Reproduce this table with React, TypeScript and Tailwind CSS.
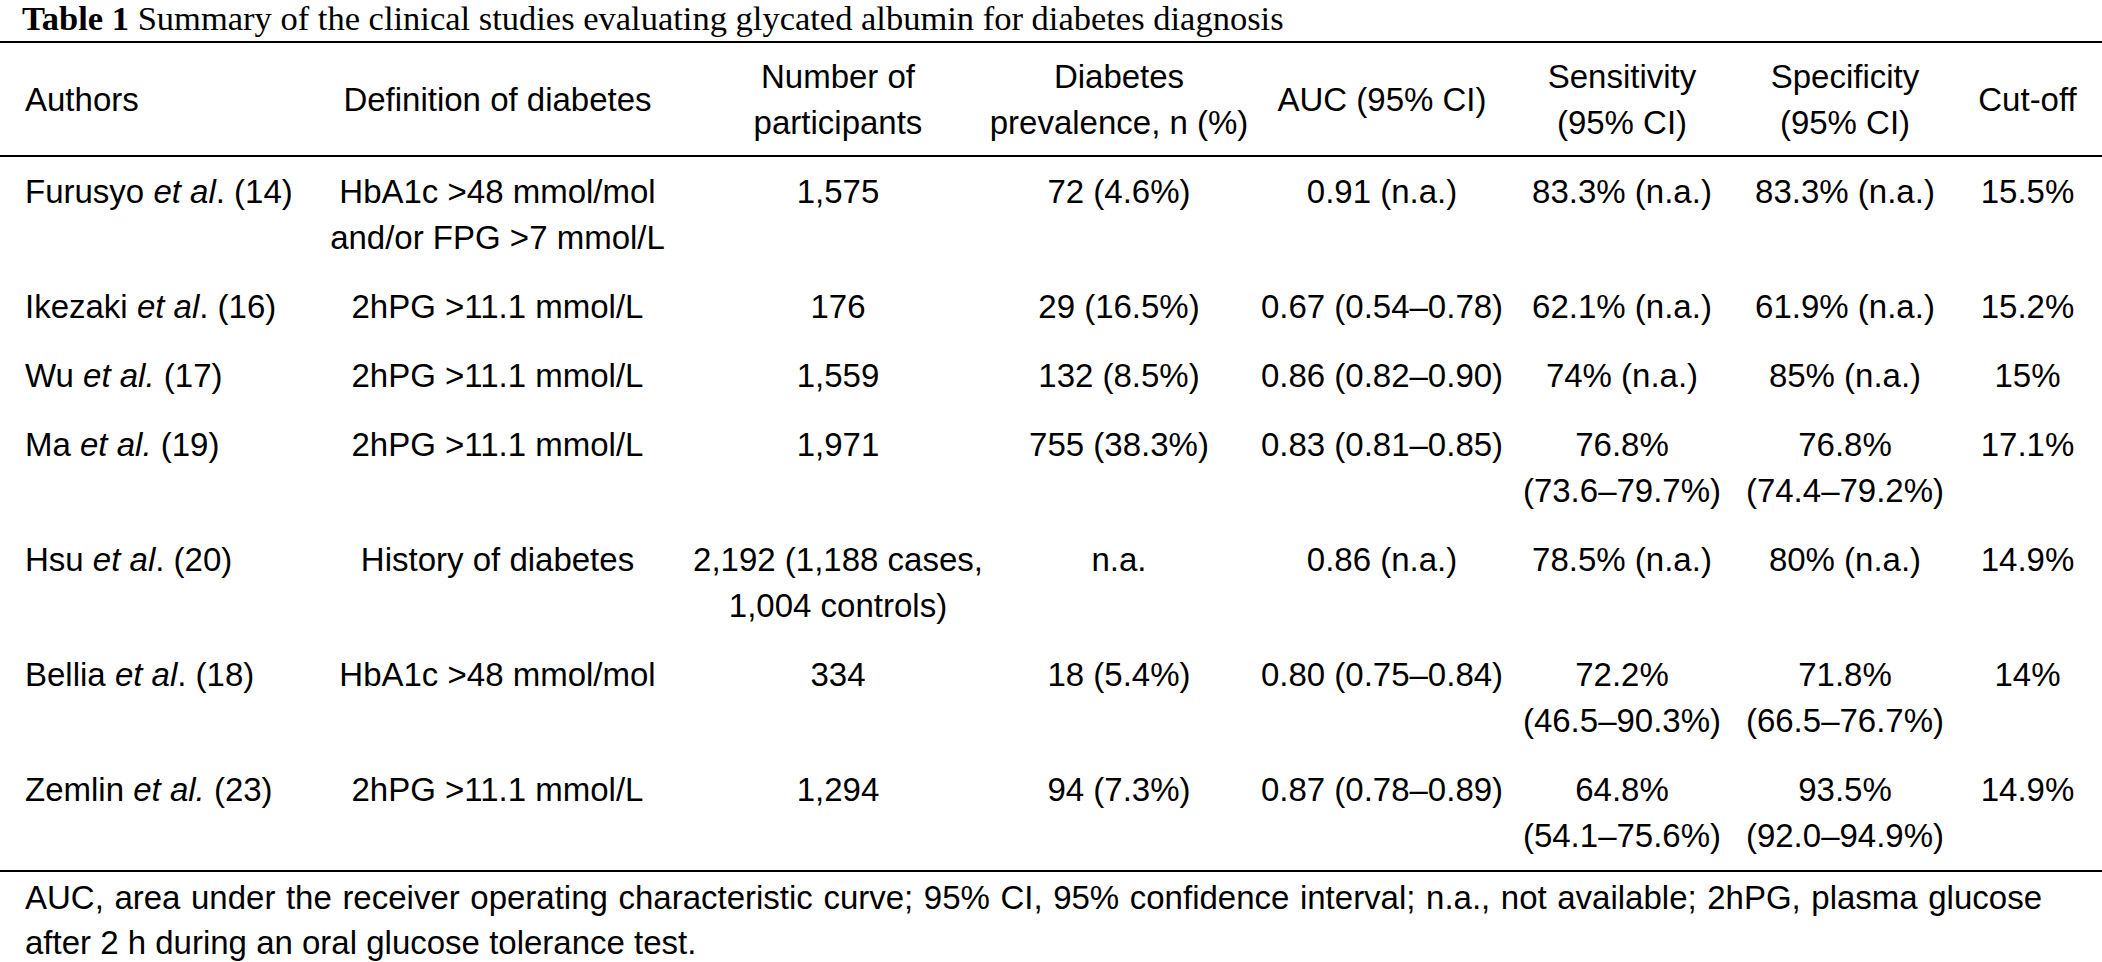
import React from "react";

type Row = {
  author: [string, string, string];
  def: string[];
  n: string[];
  prev: string[];
  auc: string[];
  sens: string[];
  spec: string[];
  cut: string[];
};

const rows: Row[] = [
  {
    author: ["Furusyo ", "et al", ". (14)"],
    def: ["HbA1c >48 mmol/mol", "and/or FPG >7 mmol/L"],
    n: ["1,575"],
    prev: ["72 (4.6%)"],
    auc: ["0.91 (n.a.)"],
    sens: ["83.3% (n.a.)"],
    spec: ["83.3% (n.a.)"],
    cut: ["15.5%"],
  },
  {
    author: ["Ikezaki ", "et al", ". (16)"],
    def: ["2hPG >11.1 mmol/L"],
    n: ["176"],
    prev: ["29 (16.5%)"],
    auc: ["0.67 (0.54–0.78)"],
    sens: ["62.1% (n.a.)"],
    spec: ["61.9% (n.a.)"],
    cut: ["15.2%"],
  },
  {
    author: ["Wu ", "et al.", " (17)"],
    def: ["2hPG >11.1 mmol/L"],
    n: ["1,559"],
    prev: ["132 (8.5%)"],
    auc: ["0.86 (0.82–0.90)"],
    sens: ["74% (n.a.)"],
    spec: ["85% (n.a.)"],
    cut: ["15%"],
  },
  {
    author: ["Ma ", "et al.", " (19)"],
    def: ["2hPG >11.1 mmol/L"],
    n: ["1,971"],
    prev: ["755 (38.3%)"],
    auc: ["0.83 (0.81–0.85)"],
    sens: ["76.8%", "(73.6–79.7%)"],
    spec: ["76.8%", "(74.4–79.2%)"],
    cut: ["17.1%"],
  },
  {
    author: ["Hsu ", "et al", ". (20)"],
    def: ["History of diabetes"],
    n: ["2,192 (1,188 cases,", "1,004 controls)"],
    prev: ["n.a."],
    auc: ["0.86 (n.a.)"],
    sens: ["78.5% (n.a.)"],
    spec: ["80% (n.a.)"],
    cut: ["14.9%"],
  },
  {
    author: ["Bellia ", "et al", ". (18)"],
    def: ["HbA1c >48 mmol/mol"],
    n: ["334"],
    prev: ["18 (5.4%)"],
    auc: ["0.80 (0.75–0.84)"],
    sens: ["72.2%", "(46.5–90.3%)"],
    spec: ["71.8%", "(66.5–76.7%)"],
    cut: ["14%"],
  },
  {
    author: ["Zemlin ", "et al.", " (23)"],
    def: ["2hPG >11.1 mmol/L"],
    n: ["1,294"],
    prev: ["94 (7.3%)"],
    auc: ["0.87 (0.78–0.89)"],
    sens: ["64.8%", "(54.1–75.6%)"],
    spec: ["93.5%", "(92.0–94.9%)"],
    cut: ["14.9%"],
  },
];

const grid =
  "grid grid-cols-[300px_395px_286px_276px_250px_230px_216px_149px]";

function Cell({ lines }: { lines: string[] }) {
  return (
    <div className="flex flex-col items-center">
      {lines.map((l, i) => (
        <div key={i} className="whitespace-nowrap">
          {l}
        </div>
      ))}
    </div>
  );
}

function HeadCell({ lines }: { lines: string[] }) {
  return (
    <div className="flex flex-col items-center justify-center">
      {lines.map((l, i) => (
        <div key={i} className="whitespace-nowrap">
          {l}
        </div>
      ))}
    </div>
  );
}

export default function App() {
  return (
    <div className="w-[2102px] h-[962px] bg-white text-black overflow-hidden">
      <div className="h-[41px] pl-[22px] font-['Liberation_Serif',serif] text-[34.5px] leading-[37px] whitespace-nowrap">
        <span className="font-bold">Table 1</span> Summary of the clinical
        studies evaluating glycated albumin for diabetes diagnosis
      </div>
      <div className="border-t-2 border-black" />
      <div className="font-['Liberation_Sans',Arial,sans-serif] text-[33px] leading-[46px]">
        <div className={`${grid} pt-[11px] pb-[9px]`}>
          <div className="flex items-center pl-[25px] whitespace-nowrap">
            Authors
          </div>
          <HeadCell lines={["Definition of diabetes"]} />
          <HeadCell lines={["Number of", "participants"]} />
          <HeadCell lines={["Diabetes", "prevalence, n (%)"]} />
          <HeadCell lines={["AUC (95% CI)"]} />
          <HeadCell lines={["Sensitivity", "(95% CI)"]} />
          <HeadCell lines={["Specificity", "(95% CI)"]} />
          <HeadCell lines={["Cut-off"]} />
        </div>
        <div className="border-t-2 border-black" />
        {rows.map((r, i) => (
          <div key={i} className={`${grid} pt-[12px] pb-[11px]`}>
            <div className="pl-[25px] whitespace-nowrap">
              {r.author[0]}
              <span className="italic">{r.author[1]}</span>
              {r.author[2]}
            </div>
            <Cell lines={r.def} />
            <Cell lines={r.n} />
            <Cell lines={r.prev} />
            <Cell lines={r.auc} />
            <Cell lines={r.sens} />
            <Cell lines={r.spec} />
            <Cell lines={r.cut} />
          </div>
        ))}
        <div className="border-t-2 border-black" />
        <div className="pl-[25px] pr-[60px] pt-[3px] leading-[45px]">
          <div className="text-justify [text-align-last:justify] whitespace-nowrap">
            AUC, area under the receiver operating characteristic curve; 95%
            CI, 95% confidence interval; n.a., not available; 2hPG, plasma
            glucose
          </div>
          <div className="whitespace-nowrap">
            after 2 h during an oral glucose tolerance test.
          </div>
        </div>
      </div>
    </div>
  );
}
